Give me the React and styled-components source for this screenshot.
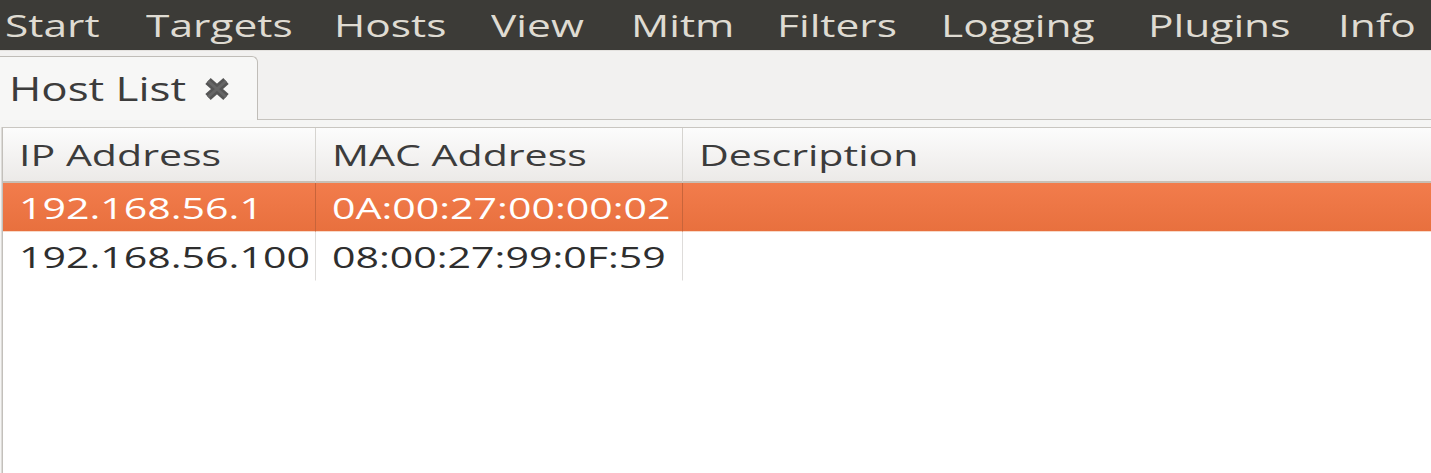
import styled, { createGlobalStyle } from 'styled-components';

// the screenshot is stretched sideways, so text gets the same stretch
const STRETCH = 1.37;

const menus = [
    { label: 'Start', w: 141 },
    { label: 'Targets', w: 188 },
    { label: 'Hosts', w: 157 },
    { label: 'View', w: 140 },
    { label: 'Mitm', w: 146 },
    { label: 'Filters', w: 164 },
    { label: 'Logging', w: 207 },
    { label: 'Plugins', w: 190 },
    { label: 'Info', w: 120 },
];

const hosts = [
    { ip: '192.168.56.1', mac: '0A:00:27:00:00:02', desc: '', selected: true },
    { ip: '192.168.56.100', mac: '08:00:27:99:0F:59', desc: '', selected: false },
];

const CloseIcon = () => (
    <svg width="28" height="24" viewBox="0 0 28 24">
        <path d="M5 4 L23 20 M23 4 L5 20" stroke="#555555" strokeWidth="8" strokeLinecap="butt" />
        <path d="M5 4 L23 20 M23 4 L5 20" stroke="#666666" strokeWidth="3" />
    </svg>
);

const App = () => {
    return (
        <>
            <GlobalStyle />
            <Window>
                <MenuBar>
                    {menus.map((m) => (
                        <MenuItem key={m.label} $w={m.w}>
                            <Stretch>{m.label}</Stretch>
                        </MenuItem>
                    ))}
                </MenuBar>
                <TabStrip>
                    <Tab>
                        <TabLabel>
                            <Stretch>Host List</Stretch>
                        </TabLabel>
                        <CloseIcon />
                    </Tab>
                </TabStrip>
                <Page>
                    <Frame>
                        <Table>
                            <HeaderCell $sep>
                                <Stretch>IP Address</Stretch>
                            </HeaderCell>
                            <HeaderCell $sep>
                                <Stretch>MAC Address</Stretch>
                            </HeaderCell>
                            <HeaderCell>
                                <Stretch>Description</Stretch>
                            </HeaderCell>
                            {hosts.map((h) => (
                                <Row key={h.ip} $selected={h.selected}>
                                    <Cell $sep>
                                        <Stretch>{h.ip}</Stretch>
                                    </Cell>
                                    <Cell $sep>
                                        <Stretch>{h.mac}</Stretch>
                                    </Cell>
                                    <Cell>
                                        <Stretch>{h.desc}</Stretch>
                                    </Cell>
                                </Row>
                            ))}
                        </Table>
                    </Frame>
                </Page>
            </Window>
        </>
    );
};
export default App;

const GlobalStyle = createGlobalStyle`
    html, body {
        margin: 0;
        padding: 0;
        background: #f2f1f0;
        overflow: hidden;
    }
    body {
        font-family: "Open Sans", "DejaVu Sans", sans-serif;
    }
`;

const Window = styled.div`
    display: flex;
    flex-direction: column;
    width: 1431px;
    height: 473px;
    overflow: hidden;
`;

const Stretch = styled.span`
    display: inline-block;
    white-space: nowrap;
    transform: scaleX(${STRETCH});
    transform-origin: left center;
`;

const MenuBar = styled.div`
    display: flex;
    flex-direction: row;
    height: 50px;
    padding-left: 5px;
    background: #3c3b37;
    flex-shrink: 0;
`;

const MenuItem = styled.div`
    flex: 0 0 ${(p) => p.$w}px;
    font-size: 31px;
    line-height: 50px;
    color: #dfdbd2;
`;

const TabStrip = styled.div`
    display: flex;
    flex-direction: row;
    align-items: flex-end;
    box-sizing: border-box;
    height: 70px;
    padding-top: 6px;
    border-top: 1px solid #e4e2df;
    border-bottom: 1px solid #c6c3be;
    background: #f2f1f0;
    flex-shrink: 0;
`;

const Tab = styled.div`
    display: flex;
    flex-direction: row;
    align-items: center;
    width: 258px;
    height: 64px;
    margin-bottom: -1px;
    box-sizing: border-box;
    padding-left: 9px;
    background: #f7f7f6;
    border: 1px solid #c0bdb8;
    border-left: none;
    border-bottom: none;
    border-top-right-radius: 6px;
`;

const TabLabel = styled.div`
    width: 194px;
    font-size: 32px;
    line-height: 64px;
    color: #3c3c3c;
`;

const Page = styled.div`
    display: flex;
    flex: 1;
    padding: 7px 0 0 2px;
    background: #f5f5f4;
`;

const Frame = styled.div`
    flex: 1;
    background: #ffffff;
    border-top: 1px solid #c9c6c1;
    border-left: 1px solid #c3c0bb;
    box-shadow: -1px 0 0 #dddbd8;
`;

const Table = styled.div`
    display: grid;
    grid-template-columns: 313px 367px 1fr;
    grid-auto-rows: 49px;
    grid-template-rows: 55px;
`;

const HeaderCell = styled.div`
    display: flex;
    align-items: center;
    padding-left: 16px;
    font-size: 30px;
    color: #3c3c3c;
    background: linear-gradient(#fcfcfc, #eceae8);
    border-bottom: 2px solid #c8bfb5;
    border-right: ${(p) => (p.$sep ? '1px solid #d6d4d0' : 'none')};
`;

const Row = styled.div`
    display: contents;
    color: ${(p) => (p.$selected ? '#ffffff' : '#2e2e2e')};
    --row-bg: ${(p) => (p.$selected ? 'linear-gradient(#f27c4c, #e8703e)' : '#ffffff')};
    --row-sep: ${(p) => (p.$selected ? '#c8643a' : '#dedcda')};
    --row-line: ${(p) => (p.$selected ? '#f8d9c8' : 'transparent')};
`;

const Cell = styled.div`
    display: flex;
    align-items: center;
    padding-left: 16px;
    font-size: 30px;
    background: var(--row-bg);
    border-bottom: 1px solid var(--row-line);
    border-right: ${(p) => (p.$sep ? '1px solid var(--row-sep)' : 'none')};
`;
